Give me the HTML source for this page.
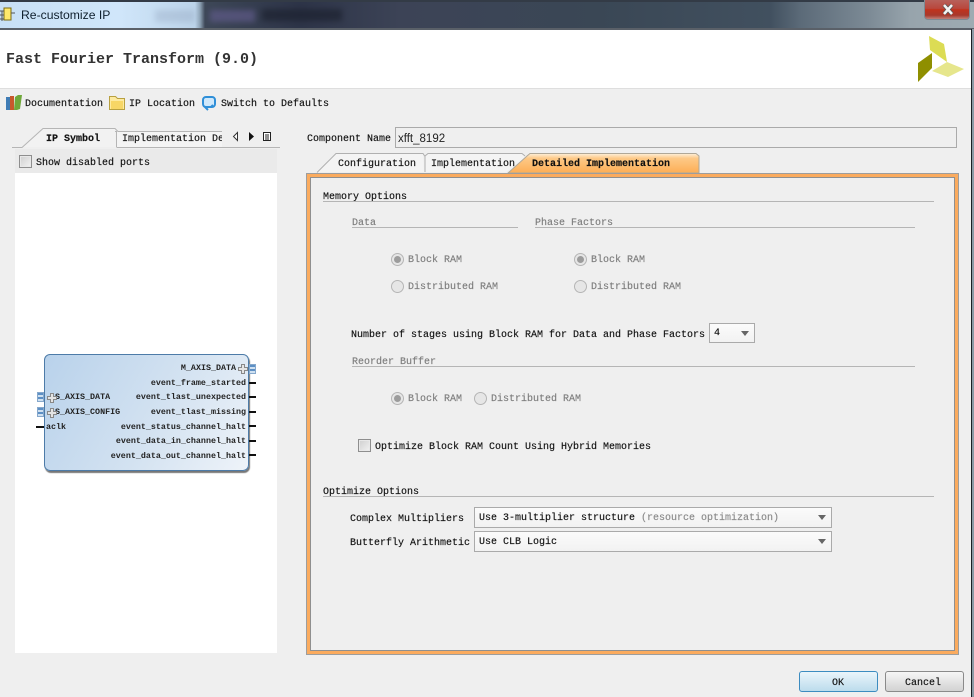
<!DOCTYPE html>
<html><head><meta charset="utf-8">
<style>
html,body{margin:0;padding:0;width:974px;height:697px;overflow:hidden;background:#efefef}
body{position:relative;font-family:"Liberation Mono",monospace;font-size:10px;color:#111}
div,span.t{position:absolute}
.t{white-space:pre;line-height:14px;height:14px;position:absolute;margin-top:2px;-webkit-text-stroke:.15px currentColor}
.g{color:#7d7d7d}
.b{font-weight:bold}
.l{height:1px;position:absolute}
.radio{width:11px;height:11px;border:1px solid #b5b5b5;border-radius:50%;background:#e6e6e6}
.radio.on::after{content:"";position:absolute;left:2px;top:2px;width:7px;height:7px;border-radius:50%;background:#9c9c9c}
.chk{width:11px;height:11px;border:1px solid #8e8e8e;background:linear-gradient(135deg,#cfcfcf,#f2f2f2);box-shadow:inset 0 0 0 1px #e8e8e8}
.combo{border:1px solid #aaa;background:linear-gradient(#fbfbfb,#f2f2f2);box-sizing:border-box}
.arr{width:0;height:0;border-left:4px solid transparent;border-right:4px solid transparent;border-top:5px solid #666}
.sym{font-size:8.35px;font-weight:bold;color:#222;text-align:right;right:728px;margin-top:0;-webkit-text-stroke:0}
.pin{background:#111;height:2px;width:7px}
.port{width:7px;height:10px;background:repeating-linear-gradient(#5d8fc4 0 2px,#cfe0f0 2px 4px);border:1px solid #86a8cc;box-sizing:border-box}
</style></head><body>
<!-- title bar -->
<div style="left:0;top:0;width:974px;height:30px;overflow:hidden;background:linear-gradient(90deg,#c8e0f6 0,#d0e6fa 120px,#bcd4ea 195px,#8ea3b6 200px,#3d4757 205px,#2d3448 300px,#3c4356 400px,#3a4755 600px,#41505f 770px,#5b6a78 800px,#7d8b96 870px,#97a4ac 910px,#9eabb2 974px)">
<div style="left:155px;top:10px;width:40px;height:12px;background:#8b9bb5;opacity:.3;filter:blur(3px)"></div>
<div style="left:210px;top:10px;width:45px;height:12px;background:#5f5a88;opacity:.7;filter:blur(3px)"></div>
<div style="left:262px;top:9px;width:80px;height:12px;background:#1d2230;opacity:.7;filter:blur(3px)"></div>
</div>
<div style="left:0;top:0;width:974px;height:2px;background:#333b46"></div>
<div style="left:0;top:28px;width:974px;height:2px;background:#5a6068"></div>
<svg style="position:absolute;left:0;top:6px" width="16" height="18"><rect x="4" y="2" width="7" height="12" fill="#ffe96b" stroke="#7b6a10"/><path d="M0 5h4M0 9h4M11 7h4M0 13h4M2 5v10" stroke="#555" fill="none"/></svg>
<span class="t" style="left:21px;top:8px;font:12.2px/14px 'Liberation Sans',sans-serif;color:#10202e;margin-top:0;-webkit-text-stroke:0">Re-customize IP</span>
<!-- close -->
<div style="left:924px;top:0;width:46px;height:20px;box-sizing:border-box;border:1px solid #7d8a94;border-top:none;border-radius:0 0 4px 4px;background:linear-gradient(#b7605a 0,#b9473c 45%,#c0331e 50%,#a8392c 80%,#c08078 100%)"></div>
<svg style="position:absolute;left:941px;top:3px" width="14" height="13"><path d="M3 2L11 11M11 2L3 11" stroke="#555" stroke-width="4"/><path d="M3 2L11 11M11 2L3 11" stroke="#f4f4f4" stroke-width="2.500"/></svg>
<!-- right window edge -->
<div style="left:971px;top:29px;width:1px;height:668px;background:#1c1f24"></div>
<div style="left:972px;top:29px;width:2px;height:668px;background:#8c9aa5"></div>
<!-- header -->
<div style="left:0;top:30px;width:971px;height:58px;background:#fff"></div>
<div style="left:0;top:88px;width:971px;height:1px;background:#dedede"></div>
<span class="t b" style="left:6px;top:51px;font-size:15px;line-height:17px;height:17px;color:#333;margin-top:0;-webkit-text-stroke:0">Fast Fourier Transform (9.0)</span>
<svg style="position:absolute;left:910px;top:30px" width="60" height="55"><path d="M19 6L34 14L37 32L20 20Z" fill="#dcdc54"/><path d="M22 23L22 38L8 52L8 33Z" fill="#8f8f00"/><path d="M22 41L37 32L54 39L38 47Z" fill="#e6e68c"/></svg>
<!-- toolbar -->
<svg style="position:absolute;left:6px;top:94px" width="16" height="17"><rect x="0" y="3" width="4" height="13" fill="#3f7cb5"/><rect x="4" y="2" width="4" height="14" fill="#c8582c"/><path d="M9 3L12 1H16L14 15L11 16H8Z" fill="#6fa83a"/></svg>
<span class="t" style="left:25px;top:96px">Documentation</span>
<svg style="position:absolute;left:109px;top:95px" width="17" height="16"><path d="M.5 1.500h6l2 2h7v11H.5Z" fill="#fdeaa0" stroke="#b8a040"/><rect x="2" y="6" width="12" height="8" fill="#f7d665"/></svg>
<span class="t" style="left:129px;top:96px">IP Location</span>
<svg style="position:absolute;left:202px;top:95px" width="15" height="16"><rect x="1" y="2" width="12" height="10" rx="3" fill="#cfe8fb" stroke="#2f8fd8" stroke-width="2"/><path d="M6 15l-3-3h6l2-2" fill="none" stroke="#2f8fd8" stroke-width="2"/></svg>
<span class="t" style="left:221px;top:96px">Switch to Defaults</span>
<!-- left tabs -->
<svg style="position:absolute;left:12px;top:127px" width="270" height="22"><path d="M11 20L31 2H103L104 20Z" fill="#f2f2f2"/><path d="M105 5H210V20H105Z" fill="#f4f4f4"/><path d="M0 20.500H10L31 1.500H103L106 4.500H210M103 4.500H104.500V20.500" fill="none" stroke="#b5b5b5"/><path d="M105 20.500H268" stroke="#b5b5b5"/></svg>
<span class="t b" style="left:46px;top:131px">IP Symbol</span>
<span class="t" style="left:122px;top:131px;width:100px;overflow:hidden">Implementation Details</span>
<svg style="position:absolute;left:228px;top:130px" width="48" height="14"><path d="M9.500 2.500V10.500L5.500 6.500Z" fill="#fff" stroke="#333"/><path d="M21 2V11L26 6.500Z" fill="#111"/><rect x="35.500" y="2.500" width="7" height="8" fill="#fff" stroke="#222"/><path d="M37 5h4M37 7h4M37 9h4" stroke="#222"/></svg>
<div style="left:15px;top:149px;width:262px;height:24px;background:#eaeaea"></div>
<div class="chk" style="left:19px;top:155px"></div>
<span class="t" style="left:36px;top:155px">Show disabled ports</span>
<div style="left:15px;top:173px;width:262px;height:480px;background:#fff"></div>
<!-- symbol -->
<div style="left:44px;top:354px;width:205px;height:117px;box-sizing:border-box;border:1px solid #4d7ba8;border-radius:6px;background:linear-gradient(120deg,#b9d2eb 0,#d3e2f1 55%,#eef3f9 100%);box-shadow:1px 2px 1px #777"></div>
<span class="t sym" style="top:361px;right:738px">M_AXIS_DATA</span>
<span class="t sym" style="top:376px">event_frame_started</span>
<span class="t sym" style="top:390px">event_tlast_unexpected</span>
<span class="t sym" style="top:405px">event_tlast_missing</span>
<span class="t sym" style="top:420px">event_status_channel_halt</span>
<span class="t sym" style="top:434px">event_data_in_channel_halt</span>
<span class="t sym" style="top:449px">event_data_out_channel_halt</span>
<span class="t sym" style="top:390px;left:55px;right:auto">S_AXIS_DATA</span>
<span class="t sym" style="top:405px;left:55px;right:auto">S_AXIS_CONFIG</span>
<span class="t sym" style="top:420px;left:46px;right:auto">aclk</span>
<svg style="position:absolute;left:237px;top:363px" width="12" height="12"><path d="M4.500 1.500h3v3h3v3h-3v3h-3v-3h-3v-3h3Z" fill="#e4e4e4" stroke="#888"/></svg>
<svg style="position:absolute;left:46px;top:392px" width="12" height="12"><path d="M4.500 1.500h3v3h3v3h-3v3h-3v-3h-3v-3h3Z" fill="#e4e4e4" stroke="#888"/></svg>
<svg style="position:absolute;left:46px;top:407px" width="12" height="12"><path d="M4.500 1.500h3v3h3v3h-3v3h-3v-3h-3v-3h3Z" fill="#e4e4e4" stroke="#888"/></svg>
<div class="port" style="left:249px;top:364px"></div>
<div class="port" style="left:37px;top:392px"></div>
<div class="port" style="left:37px;top:407px"></div>
<div class="pin" style="left:36px;top:426px;width:8px"></div>
<div class="pin" style="left:249px;top:382px"></div>
<div class="pin" style="left:249px;top:396px"></div>
<div class="pin" style="left:249px;top:411px"></div>
<div class="pin" style="left:249px;top:425px"></div>
<div class="pin" style="left:249px;top:440px"></div>
<div class="pin" style="left:249px;top:454px"></div>
<!-- component -->
<span class="t" style="left:307px;top:131px">Component Name</span>
<div style="left:395px;top:127px;width:562px;height:21px;box-sizing:border-box;border:1px solid #aaa"></div>
<span class="t" style="left:398px;top:131px;font-family:'Liberation Sans',sans-serif;font-size:11.5px;color:#222;margin-top:1px;-webkit-text-stroke:0">xfft_8192</span>
<!-- right tabs -->
<svg style="position:absolute;left:300px;top:150px" width="410" height="26"><defs><linearGradient id="o" x1="0" y1="0" x2="0" y2="1"><stop offset="0" stop-color="#fdf0dc"/><stop offset=".25" stop-color="#fdc987"/><stop offset="1" stop-color="#fdae55"/></linearGradient></defs><path d="M17 22L36 4H123L124 22Z" fill="#f4f4f4"/><path d="M125 7L128 4H222L226 7L206 22H125Z" fill="#f4f4f4"/><path d="M17 22.500L36 3.500H123L125 6.500V22M125 6L128 3.500H222L225 6" fill="none" stroke="#b0b0b0"/><path d="M208 23L227 6L230 3.500H396L399 6V23Z" fill="url(#o)" stroke="#b0a898"/></svg>
<span class="t" style="left:338px;top:156px">Configuration</span>
<span class="t" style="left:431px;top:156px;width:86px;overflow:hidden">Implementation</span>
<span class="t b" style="left:532px;top:156px">Detailed Implementation</span>
<!-- panel -->
<div style="left:306px;top:173px;width:653px;height:482px;box-sizing:border-box;border:1px solid #9d9d9d;background:#efefef"></div>
<div style="left:307px;top:174px;width:651px;height:480px;box-sizing:border-box;border:3px solid #fbab5e"></div>
<div style="left:310px;top:177px;width:645px;height:474px;box-sizing:border-box;border:1px solid #8f8f8f;background:#efefef"></div>
<span class="t" style="left:323px;top:189px">Memory Options</span>
<div class="l" style="left:323px;top:201px;width:611px;background:#b5b5b5"></div>
<span class="t g" style="left:352px;top:215px">Data</span>
<div class="l" style="left:352px;top:227px;width:166px;background:#b5b5b5"></div>
<span class="t g" style="left:535px;top:215px">Phase Factors</span>
<div class="l" style="left:535px;top:227px;width:380px;background:#b5b5b5"></div>
<div class="radio on" style="left:391px;top:253px"></div>
<span class="t g" style="left:408px;top:252px">Block RAM</span>
<div class="radio on" style="left:574px;top:253px"></div>
<span class="t g" style="left:591px;top:252px">Block RAM</span>
<div class="radio" style="left:391px;top:280px"></div>
<span class="t g" style="left:408px;top:279px">Distributed RAM</span>
<div class="radio" style="left:574px;top:280px"></div>
<span class="t g" style="left:591px;top:279px">Distributed RAM</span>
<span class="t" style="left:351px;top:327px">Number of stages using Block RAM for Data and Phase Factors</span>
<div class="combo" style="left:709px;top:323px;width:46px;height:20px"></div>
<span class="t" style="left:714px;top:325px">4</span>
<div class="arr" style="left:741px;top:331px"></div>
<span class="t g" style="left:352px;top:354px">Reorder Buffer</span>
<div class="l" style="left:352px;top:366px;width:563px;background:#b5b5b5"></div>
<div class="radio on" style="left:391px;top:392px"></div>
<span class="t g" style="left:408px;top:391px">Block RAM</span>
<div class="radio" style="left:474px;top:392px"></div>
<span class="t g" style="left:491px;top:391px">Distributed RAM</span>
<div class="chk" style="left:358px;top:439px"></div>
<span class="t" style="left:375px;top:439px">Optimize Block RAM Count Using Hybrid Memories</span>
<span class="t" style="left:323px;top:484px">Optimize Options</span>
<div class="l" style="left:323px;top:496px;width:611px;background:#b5b5b5"></div>
<span class="t" style="left:350px;top:511px">Complex Multipliers</span>
<div class="combo" style="left:474px;top:507px;width:358px;height:21px"></div>
<span class="t" style="left:479px;top:510px">Use 3-multiplier structure <span style="color:#8a8a8a">(resource optimization)</span></span>
<div class="arr" style="left:818px;top:515px"></div>
<span class="t" style="left:350px;top:535px">Butterfly Arithmetic</span>
<div class="combo" style="left:474px;top:531px;width:358px;height:21px"></div>
<span class="t" style="left:479px;top:534px">Use CLB Logic</span>
<div class="arr" style="left:818px;top:539px"></div>
<!-- buttons -->
<div style="left:799px;top:671px;width:79px;height:21px;box-sizing:border-box;border:1px solid #3c8cc0;border-radius:3px;background:linear-gradient(#eaf5fb,#bcdcec)"></div>
<span class="t" style="left:832px;top:675px">OK</span>
<div style="left:885px;top:671px;width:79px;height:21px;box-sizing:border-box;border:1px solid #8a8a8a;border-radius:3px;background:linear-gradient(#f6f6f6,#d2d2d2)"></div>
<span class="t" style="left:905px;top:675px">Cancel</span>
</body></html>
